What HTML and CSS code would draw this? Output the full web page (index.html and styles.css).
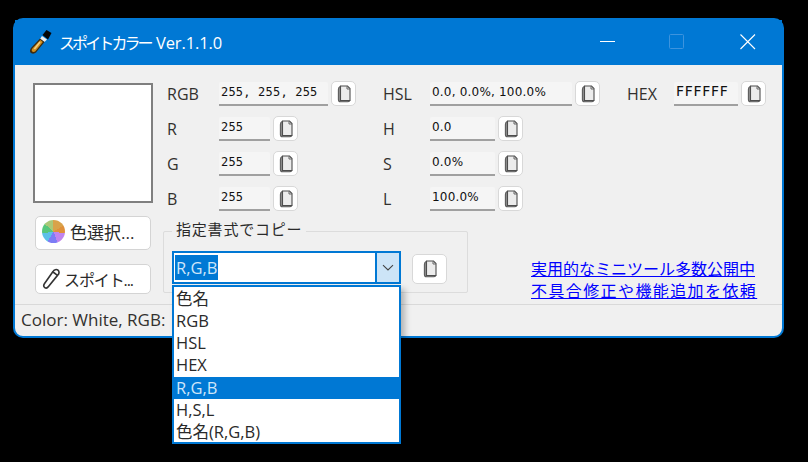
FILE: index.html
```html
<!DOCTYPE html>
<html lang="ja">
<head>
<meta charset="utf-8">
<title>スポイトカラー</title>
<link rel="stylesheet" href="styles.css">
</head>
<body>
<svg class="defs" width="0" height="0" aria-hidden="true">
  <symbol id="copy" viewBox="0 0 14 18">
    <path d="M3.5 1.2C1.8 2 1.4 3 1.4 4.5V14.5C1.4 16 2.2 16.8 3.6 16.8H10.5C11.6 16.8 12.4 16.4 12.9 15.5" fill="#8f8f8f" stroke="#5c5c5c" stroke-width="1.1"/>
    <path d="M3.5 1H10.5L13 3.5V15.5H3.5Z" fill="#ececec" stroke="#4d4d4d" stroke-width="1.1"/>
    <path d="M10 1.2V4H13" fill="none" stroke="#666" stroke-width="1"/>
  </symbol>
</svg>
<div class="window">
  <header class="titlebar">
    <svg class="logo" width="24" height="26" viewBox="0 0 24 26" aria-hidden="true">
      <path d="M14.5 6L18.5 1L23.5 4L20 10.5Z" fill="#050505"/>
      <path d="M14 7L19 10.5L16.5 13L12 10Z" fill="#ececec"/>
      <path d="M12 9.5L16.5 13L8 23.5C6.5 25 3.5 25 2.5 23.5C1.5 22 2 20.5 3 19Z" fill="#3d2c12"/>
      <path d="M12.4 11L14.8 13L7.4 22.2C6.4 23.2 4.6 23.2 4 22.2C3.5 21.4 3.8 20.4 4.4 19.6Z" fill="#d18f1f"/>
      <path d="M11.5 12.5L12.6 13.4L7 20.5L5.8 19.6Z" fill="#f0cf86"/>
    </svg>
    <h1 class="title"><span class="title-kana">スポイトカラー</span> Ver.1.1.0</h1>
    <div class="controls">
      <svg class="ctl ctl-min" width="16" height="16" viewBox="0 0 16 16" aria-hidden="true"><path d="M0 7.5H15" stroke="#fff"/></svg>
      <svg class="ctl ctl-max" width="16" height="16" viewBox="0 0 16 16" aria-hidden="true"><rect x=".5" y=".5" width="14" height="14" rx="1" fill="none" stroke="#3d94de"/></svg>
      <svg class="ctl ctl-close" width="16" height="16" viewBox="0 0 16 16" aria-hidden="true"><path d="M.5.5L15 15M15 .5L.5 15" stroke="#fff" stroke-width="1.1"/></svg>
    </div>
  </header>

  <main class="client">
    <section class="top">
      <div class="swatch"></div>
      <div class="fields fields-a">
        <div class="row"><span class="lbl">RGB</span><span class="field w109">255, 255, 255</span><button class="copy"><svg class="ico"><use href="#copy"/></svg></button></div>
        <div class="row"><span class="lbl">R</span><span class="field w51">255</span><button class="copy"><svg class="ico"><use href="#copy"/></svg></button></div>
        <div class="row"><span class="lbl">G</span><span class="field w51">255</span><button class="copy"><svg class="ico"><use href="#copy"/></svg></button></div>
        <div class="row"><span class="lbl">B</span><span class="field w51">255</span><button class="copy"><svg class="ico"><use href="#copy"/></svg></button></div>
      </div>
      <div class="fields fields-b">
        <div class="row"><span class="lbl lbl-n">HSL</span><span class="field w142 prop">0.0, 0.0%, 100.0%</span><button class="copy"><svg class="ico"><use href="#copy"/></svg></button></div>
        <div class="row"><span class="lbl lbl-n">H</span><span class="field w65 prop">0.0</span><button class="copy"><svg class="ico"><use href="#copy"/></svg></button></div>
        <div class="row"><span class="lbl lbl-n">S</span><span class="field w65 prop">0.0%</span><button class="copy"><svg class="ico"><use href="#copy"/></svg></button></div>
        <div class="row"><span class="lbl lbl-n">L</span><span class="field w65 prop">100.0%</span><button class="copy"><svg class="ico"><use href="#copy"/></svg></button></div>
      </div>
      <div class="fields fields-c">
        <div class="row"><span class="lbl lbl-n">HEX</span><span class="field w64 hex">FFFFFF</span><button class="copy"><svg class="ico"><use href="#copy"/></svg></button></div>
      </div>
    </section>

    <section class="bottom">
      <div class="actions">
        <button class="action action-color"><span class="wheel"></span>色選択...</button>
        <button class="action action-drop">
          <svg width="20" height="22" viewBox="0 0 20 22" aria-hidden="true">
            <path d="M12 3.5C13 1.6 15.5 1 17 2.2C18.6 3.6 18.2 6 16.5 7.4L7.5 18.6C6.6 19.8 5 20.5 3.8 19.6C2.5 18.6 2.6 17 3.4 15.8Z" fill="#fff" stroke="#333" stroke-width="1.6"/>
            <path d="M12 4L16.5 7.4" stroke="#333" stroke-width="1.6"/>
          </svg>
          <span>スポイト...</span>
        </button>
      </div>
      <div class="group">
        <span class="legend">指定書式でコピー</span>
        <div class="combo">
          <div class="combo-box">
            <div class="combo-text"><span class="combo-sel">R,G,B</span></div>
            <div class="combo-arrow">
              <svg width="12" height="8" viewBox="0 0 12 8" aria-hidden="true"><path d="M1 1.2L6 6L11 1.2" fill="none" stroke="#444" stroke-width="1.1"/></svg>
            </div>
          </div>
          <ul class="popup">
            <li>色名</li>
            <li>RGB</li>
            <li>HSL</li>
            <li>HEX</li>
            <li class="on">R,G,B</li>
            <li>H,S,L</li>
            <li>色名(R,G,B)</li>
          </ul>
        </div>
        <button class="copy copy-wide"><svg class="ico"><use href="#copy"/></svg></button>
      </div>
      <div class="links">
        <a href="#">実用的なミニツール多数公開中</a>
        <a href="#" class="link-wide">不具合修正や機能追加を依頼</a>
      </div>
    </section>
  </main>

  <footer class="status">Color: White, RGB:</footer>
</div>
</body>
</html>
```

FILE: styles.css
```css
* { box-sizing: border-box; }

html, body {
  margin: 0;
  height: 100%;
  background: #000;
}

body {
  padding: 18px 0 0 13px;
  overflow: hidden;
  font-family: "Open Sans", "Noto Sans CJK JP", sans-serif;
  color: #2a2a2a;
}

.defs { position: absolute; }

.window {
  width: 771px;
  height: 320px;
  display: flex;
  flex-direction: column;
  background: #f0f0f0;
  border: 2px solid #0078d4;
  border-radius: 10px;
}

.titlebar {
  flex: none;
  height: 45px;
  display: flex;
  align-items: center;
  padding-left: 13px;
  background: #0078d4;
  color: #fff;
}

.logo { flex: none; margin-top: -2px; }

.title {
  margin: -2px 0 0 7px;
  font-size: 16.5px;
  font-weight: 400;
  letter-spacing: -0.1px;
  white-space: nowrap;
}

.title-kana {
  font-size: 16px;
  letter-spacing: -2.9px;
  margin-right: 1px;
}

.controls {
  margin-left: auto;
  margin-top: -2px;
  display: flex;
  align-items: center;
  padding-right: 26px;
  gap: 55px;
}

.ctl { display: block; }
.ctl-min { margin-right: -2px; }

.client {
  flex: 1;
  display: flex;
  flex-direction: column;
  min-height: 0;
}

.top {
  display: flex;
  height: 151px;
  padding: 16px 0 0 18px;
}

.swatch {
  flex: none;
  width: 120px;
  height: 120px;
  margin: 2px 14px 0 0;
  background: #fff;
  border: 2px solid #7f7f7f;
}

.fields {
  flex: none;
  display: flex;
  flex-direction: column;
  gap: 10px;
}

.fields-a { width: 216px; }
.fields-b { width: 244px; }

.row {
  display: flex;
  align-items: center;
  height: 25px;
}

.lbl {
  flex: none;
  width: 52px;
  font-size: 16px;
  color: #33302e;
}

.lbl-n { width: 47px; }

.field {
  flex: none;
  height: 24px;
  padding: 2px 0 0 2px;
  background: #f5f5f5;
  border-bottom: 2px solid #a0a0a0;
  border-radius: 2px 2px 0 0;
  font-family: "DejaVu Sans Mono", monospace;
  font-size: 12px;
  line-height: 16px;
  letter-spacing: 0.2px;
  color: #111;
  white-space: nowrap;
}

.prop {
  font-family: "DejaVu Sans", sans-serif;
  letter-spacing: 0.2px;
}

.hex {
  padding-top: 0;
  font-family: "DejaVu Sans", sans-serif;
  font-size: 14px;
  line-height: 18px;
  letter-spacing: 0.7px;
}

.w51 { width: 51px; }
.w64 { width: 64px; }
.w65 { width: 65px; }
.w109 { width: 109px; }
.w142 { width: 142px; }

.copy {
  flex: none;
  width: 25px;
  height: 25px;
  margin-left: 3px;
  padding: 0;
  display: flex;
  align-items: center;
  justify-content: center;
  background: #fff;
  border: 1px solid #d8d8d8;
  border-radius: 5px;
}

.ico {
  display: block;
  width: 14px;
  height: 18px;
}

.bottom {
  flex: 1;
  display: flex;
  min-height: 0;
  padding-left: 20px;
}

.actions {
  flex: none;
  width: 116px;
  display: flex;
  flex-direction: column;
  gap: 14px;
}

.action {
  display: flex;
  align-items: center;
  width: 116px;
  padding: 0;
  background: #fff;
  border: 1px solid #d4d4d4;
  border-radius: 5px;
  font-family: "Open Sans", "Noto Sans CJK JP", sans-serif;
  font-size: 16px;
  color: #2a2a2a;
}

.action-color {
  height: 34px;
  padding: 0 0 3px 6px;
  gap: 5px;
  font-size: 17px;
}

.action-drop {
  height: 30px;
  padding-left: 5px;
  gap: 3px;
}

.action-drop span {
  margin-top: -1px;
  letter-spacing: -1.1px;
}

.wheel {
  flex: none;
  width: 23px;
  height: 23px;
  border-radius: 50%;
  background: conic-gradient(#d9a24a 0 60deg, #e0903a 60deg 100deg, #c184ee 100deg 160deg, #7c7cf5 160deg 210deg, #5cc0e8 210deg 260deg, #57c77c 260deg 310deg, #a9c878 310deg 360deg);
}

.group {
  position: relative;
  flex: none;
  width: 305px;
  height: 62px;
  margin: 15px 0 0 12px;
  padding: 19px 0 0 8px;
  display: flex;
  align-items: flex-start;
  border: 1px solid #dcdcdc;
  border-radius: 2px;
}

.legend {
  position: absolute;
  left: 8px;
  top: -13px;
  padding: 0 4px;
  background: #f0f0f0;
  font-size: 15px;
  line-height: 20px;
  color: #2a2a2a;
  letter-spacing: 0.8px;
  white-space: nowrap;
}

.combo {
  position: relative;
  flex: none;
  width: 229px;
}

.combo-box {
  display: flex;
  height: 33px;
  background: #fff;
  border: 2px solid #0078d4;
}

.combo-text {
  flex: 1;
  display: flex;
  align-items: flex-start;
  padding: 2px 0 0 1px;
}

.combo-sel {
  display: block;
  padding: 0 1px;
  background: #0078d4;
  color: #cfe6fa;
  font-size: 16.5px;
  line-height: 25px;
}

.combo-arrow {
  flex: none;
  width: 24px;
  display: flex;
  align-items: center;
  justify-content: center;
  background: #cce4f7;
  border-left: 2px solid #0078d4;
}

.popup {
  position: absolute;
  z-index: 2;
  left: 0;
  top: 34px;
  width: 229px;
  height: 159px;
  margin: 0;
  padding: 1px 0 0;
  list-style: none;
  display: grid;
  grid-auto-rows: 22.14px;
  align-content: start;
  background: #fff;
  border: 2px solid #0078d4;
  box-shadow: 4px 4px 6px rgba(0, 0, 0, 0.25);
  font-size: 16.5px;
  line-height: 22px;
  color: #2a2a2a;
}

.popup li {
  display: flex;
  align-items: center;
  padding-left: 2px;
  white-space: nowrap;
}

.popup .on {
  background: #0078d4;
  color: #cfe6fa;
}

.copy-wide {
  width: 35px;
  height: 30px;
  margin: 3px 0 0 11px;
}

.links {
  flex: none;
  display: flex;
  flex-direction: column;
  margin: 41px 0 0 63px;
  font-family: "Noto Sans CJK JP", sans-serif;
  font-size: 16px;
  line-height: 22px;
}

.links a {
  color: #0000ff;
  text-decoration: underline;
  white-space: nowrap;
}

.link-wide { letter-spacing: 1.4px; }

.status {
  flex: none;
  height: 32px;
  padding: 5px 0 0 6px;
  border-top: 1px solid #d9d9d9;
  border-radius: 0 0 8px 8px;
  font-size: 17px;
  line-height: 20px;
  color: #33302e;
  white-space: nowrap;
}
```
